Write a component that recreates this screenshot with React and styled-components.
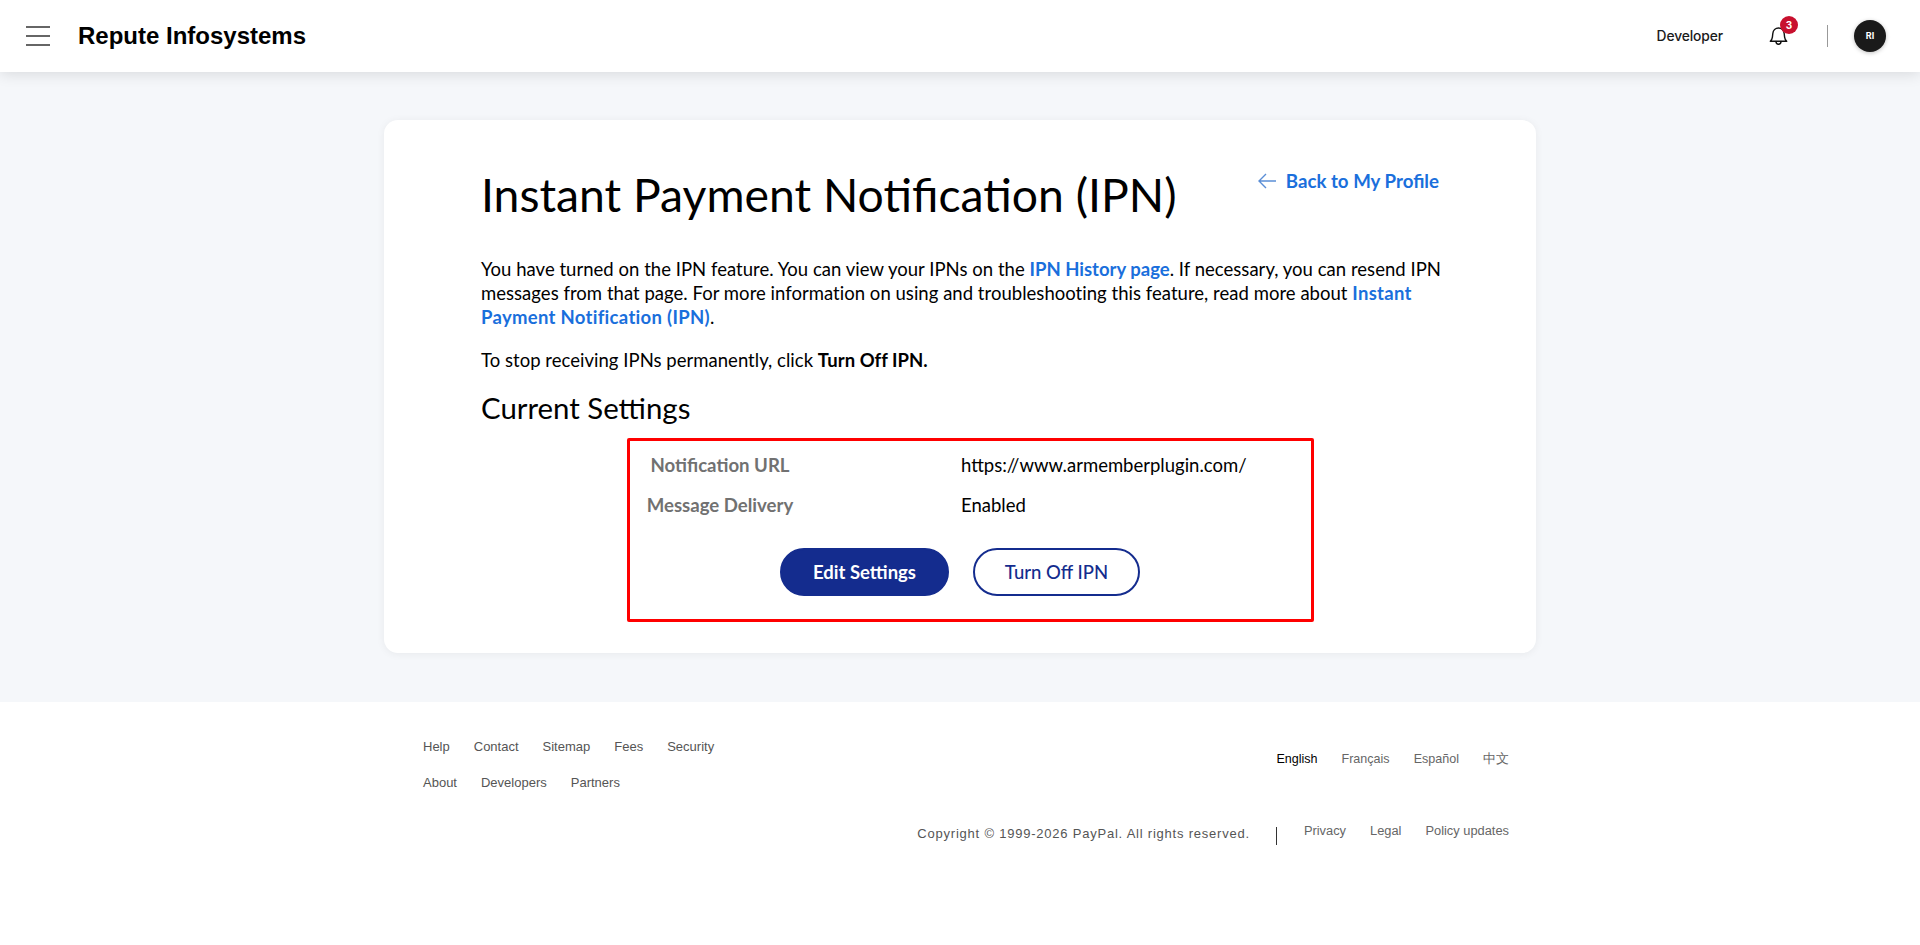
import React from "react";
import styled, { createGlobalStyle } from "styled-components";

const Global = createGlobalStyle`
  html, body { margin: 0; padding: 0; height: 100%; background: #fff; }
  #root { min-height: 100%; }
  * { box-sizing: border-box; }
`;
const sans = `"Lato", "Noto Sans", sans-serif`;
const arial = `"Liberation Sans", Arial, sans-serif`;

const Page = styled.div`
  min-height: 945px; display: flex; flex-direction: column; background: #fff;
`;
const Header = styled.header`
  height: 72px; background: #fff; display: flex; align-items: center;
  padding: 0 34px 0 26px; box-shadow: 0 2px 14px rgba(0,0,0,.12); position: relative;
`;
const Burger = styled.button`
  width: 24px; height: 20px; padding: 0; border: 0; background: none;
  display: flex; flex-direction: column; justify-content: space-between; margin-right: 28px;
`;
const BurgerBar = styled.span` display: block; height: 2px; background: #666; `;
const Brand = styled.div`
  font: 700 24px/32px ${arial}; color: #000; flex: 1;
`;
const Role = styled.div`
  font: 500 13.800px/20px Inter, sans-serif; color: #1a1a1a; margin-right: 46px; letter-spacing: -.1px;
`;
const BellWrap = styled.div` position: relative; width: 19px; height: 18px; margin-right: 39px; `;
const Badge = styled.span`
  position: absolute; left: 11px; top: -11px; width: 18px; height: 18px; border-radius: 50%;
  background: #c8102e; color: #fff; font: 700 10px/18px Inter, sans-serif; text-align: center;
`;
const Sep = styled.div` width: 1px; height: 22px; background: #999; margin-right: 26px; `;
const Avatar = styled.div`
  width: 32px; height: 32px; border-radius: 50%; background: #1a1a1a; color: #fff;
  font: 700 9px/32px Inter, sans-serif; text-align: center; box-shadow: 0 1px 4px rgba(0,0,0,.25);
`;
const Main = styled.main` background: #f5f7fa; padding: 48px 0 49px; `;
const Card = styled.section`
  width: 1152px; margin: 0 auto; background: #fff; border-radius: 14px;
  box-shadow: 0 1px 8px rgba(0,0,0,.06); padding: 47px 97px 31px;
  font-family: ${sans}; color: #000;
`;
const TitleRow = styled.div` display: flex; justify-content: space-between; align-items: flex-start; `;
const Title = styled.h1` margin: 0; font: 400 46.300px/54px ${sans}; color: #000; `;
const Back = styled.a`
  margin-top: 2px; display: flex; align-items: center; gap: 10px;
  font: 700 18.700px/24px ${sans}; color: #1a6fdc;
`;
const Para = styled.p`
  margin: ${p => p.$top}px -12px 0 0; font: 400 18.500px/24px ${sans}; letter-spacing: .03px; color: #000;
`;
const Link = styled.a` font-weight: 700; color: #1a6fdc; letter-spacing: ${p => p.$track}px; `;
const Sub = styled.h2` margin: 18px 0 0; font: 400 29.400px/36px ${sans}; color: #000; `;
const Box = styled.div`
  width: 687px; margin: 12px 0 0 146px; border: 3px solid #f00; border-radius: 2px; padding: 4px 0 23px 0;
`;
const Row = styled.div` display: grid; grid-template-columns: 180px 1fr; column-gap: 151px; height: 40px; align-items: center; `;
const Label = styled.div` text-align: center; font: 700 18.600px/24px ${sans}; color: #717171; `;
const Value = styled.div` font: 400 18.500px/24px ${sans}; color: #000; `;
const Actions = styled.div` display: flex; justify-content: center; gap: 24px; margin-top: 23px; padding-right: 21px; `;
const Btn = styled.button`
  width: ${p => p.$w}px; height: 48px; border-radius: 24px; padding: 0;
  border: 2px solid #142c8e; background: ${p => p.$solid ? "#142c8e" : "#fff"};
  color: ${p => p.$solid ? "#fff" : "#142c8e"};
  font: ${p => p.$solid ? 700 : 500} 18.500px/24px ${sans};
`;
const Footer = styled.footer` flex: 1; background: #fff; padding-top: 35px; font-family: ${arial}; `;
const FooterInner = styled.div` width: 1152px; margin: 0 auto; padding: 0 27px 0 39px; `;
const FooterTop = styled.div` display: flex; justify-content: space-between; align-items: flex-start; `;
const NavRows = styled.div` display: flex; flex-direction: column; gap: 16px; `;
const NavRow = styled.div` display: flex; gap: 24px; `;
const NavLink = styled.a` font: 400 13px/20px ${arial}; color: #555; `;
const Langs = styled.div` display: flex; gap: 24px; margin-top: 12px; `;
const Lang = styled.a`
  font: 400 12.550px/20px ${arial}; color: ${p => p.$on ? "#000" : "#666"};
`;
const Bottom = styled.div` display: flex; justify-content: flex-end; align-items: flex-start; margin-top: 28px; `;
const Copy = styled.span` margin-top: 3px; font: 400 13px/20px ${arial}; color: #555; letter-spacing: .78px; margin-right: 26px; `;
const Bar = styled.span` width: 1px; height: 18px; background: #333; margin-top: 6px; margin-right: 27px; `;
const Legal = styled.div` display: flex; gap: 24px; `;
const LegalLink = styled.a` font: 400 12.850px/20px ${arial}; color: #666; `;

const BellIcon = () => (
  <svg width="19" height="18" viewBox="0 0 18 18" fill="none" stroke="#111" strokeWidth="1.4" strokeLinejoin="round" strokeLinecap="round">
    <path d="M.8 14.2c1.2-1 1.9-2.2 2.1-4l.4-3.6C3.6 3.4 6 1 9 1s5.400 2.400 5.700 5.600l.4 3.600c.2 1.800.9 3 2.100 4z" />
    <path d="M6.500 14.500c0 1.700 1.100 2.700 2.500 2.700s2.500-1 2.500-2.700" />
  </svg>
);
const ArrowIcon = () => (
  <svg width="18" height="16" viewBox="0 0 18 16" fill="none" stroke="#5b8ed6" strokeWidth="1.4">
    <path d="M18 8H1M8 1 1 8l7 7" />
  </svg>
);

export default function App() {
  return (
    <Page>
      <Global />
      <Header>
        <Burger aria-label="Menu"><BurgerBar /><BurgerBar /><BurgerBar /></Burger>
        <Brand>Repute Infosystems</Brand>
        <Role>Developer</Role>
        <BellWrap><BellIcon /><Badge>3</Badge></BellWrap>
        <Sep />
        <Avatar>RI</Avatar>
      </Header>
      <Main>
        <Card>
          <TitleRow>
            <Title>Instant Payment Notification (IPN)</Title>
            <Back><ArrowIcon />Back to My Profile</Back>
          </TitleRow>
          <Para $top={36}>
            You have turned on the IPN feature. You can view your IPNs on the <Link $track={0}>IPN History page</Link>. If necessary, you can resend IPN messages from that page. For more information on using and troubleshooting this feature, read more about <Link $track={0.3}>Instant Payment Notification (IPN)</Link>.
          </Para>
          <Para $top={19}>To stop receiving IPNs permanently, click <b>Turn Off IPN.</b></Para>
          <Sub>Current Settings</Sub>
          <Box>
            <Row><Label>Notification URL</Label><Value>https://www.armemberplugin.com/</Value></Row>
            <Row><Label>Message Delivery</Label><Value>Enabled</Value></Row>
            <Actions>
              <Btn $solid $w={169}>Edit Settings</Btn>
              <Btn $w={167}>Turn Off IPN</Btn>
            </Actions>
          </Box>
        </Card>
      </Main>
      <Footer>
        <FooterInner>
          <FooterTop>
            <NavRows>
              <NavRow>
                <NavLink>Help</NavLink><NavLink>Contact</NavLink><NavLink>Sitemap</NavLink><NavLink>Fees</NavLink><NavLink>Security</NavLink>
              </NavRow>
              <NavRow>
                <NavLink>About</NavLink><NavLink>Developers</NavLink><NavLink>Partners</NavLink>
              </NavRow>
            </NavRows>
            <Langs>
              <Lang $on>English</Lang><Lang>Français</Lang><Lang>Español</Lang><Lang>中文</Lang>
            </Langs>
          </FooterTop>
          <Bottom>
            <Copy>Copyright © 1999-2026 PayPal. All rights reserved.</Copy>
            <Bar />
            <Legal><LegalLink>Privacy</LegalLink><LegalLink>Legal</LegalLink><LegalLink>Policy updates</LegalLink></Legal>
          </Bottom>
        </FooterInner>
      </Footer>
    </Page>
  );
}
